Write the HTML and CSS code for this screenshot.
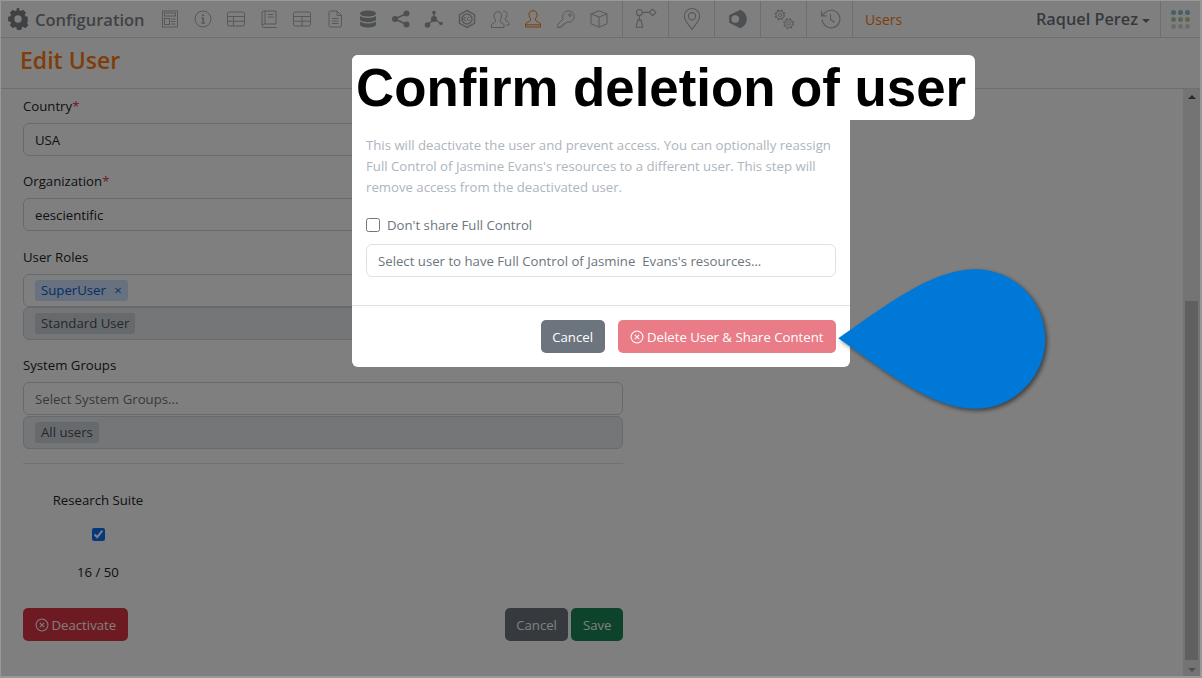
FILE: index.html
```html
<!DOCTYPE html>
<html lang="en">
<head>
    <meta charset="UTF-8">
    <title>Edit User</title>
    <link rel="stylesheet" href="styles.css">
</head>
<body>
<div class="app">
    <nav class="topbar">
        <a class="brand">
            <svg class="gear" viewBox="0 0 24 24"><path d="M21.5 14.4v-4.8l-2.6-.5a7.4 7.4 0 0 0-.7-1.7l1.5-2.2-3.4-3.4-2.2 1.5a7.4 7.4 0 0 0-1.7-.7L11.900 0H9.600l-.5 2.600a7.400 7.400 0 0 0-1.700.7L5.200 1.800 1.800 5.200l1.500 2.200a7.400 7.400 0 0 0-.7 1.700L0 9.600v4.800l2.600.5a7.400 7.400 0 0 0 .7 1.700l-1.500 2.200 3.400 3.400 2.200-1.500a7.400 7.400 0 0 0 1.700.7l.5 2.600h4.800l.5-2.600a7.400 7.400 0 0 0 1.700-.7l2.200 1.500 3.400-3.400-1.500-2.200a7.400 7.400 0 0 0 .7-1.700zM10.800 16a4 4 0 1 1 0-8 4 4 0 0 1 0 8z" transform="translate(1.200 0)"/></svg>
            <span>Configuration</span>
        </a>
        <div class="tools">
            <a class="tool"><svg viewBox="0 0 20 20"><rect x="2.500" y="2" width="15" height="16"/><rect x="4.500" y="4" width="11" height="3"/><rect x="4.500" y="9.500" width="5" height="6"/><path d="M11 10h4.500M11 12.500h4.500M11 15h4.500"/></svg></a>
            <a class="tool"><svg viewBox="0 0 20 20"><circle cx="10" cy="10" r="8"/><path d="M8.500 9h1.700v5M8.300 14h3.600" stroke-width="1.500"/><circle class="fill" cx="10" cy="6.300" r="1"/></svg></a>
            <a class="tool"><svg viewBox="0 0 20 20"><rect x="1.500" y="3" width="17" height="14" rx="2"/><path d="M1.500 7.500h17M1.500 12.200h17M7.500 7.500V17"/></svg></a>
            <a class="tool"><svg viewBox="0 0 20 20"><path d="M3 16V4a2 2 0 0 1 2-2h12v13H5a2 2 0 0 0-2 2 2 2 0 0 0 2 1.500h12.500M6 2v13M9 5.500h5.500M9 8h5.500"/></svg></a>
            <a class="tool"><svg viewBox="0 0 20 20"><rect x="1.500" y="3" width="17" height="14" rx="2"/><path d="M1.500 7.500h17M1.500 12.200h17M10 7.500V17"/></svg></a>
            <a class="tool"><svg viewBox="0 0 20 20"><path d="M4 3.500A1.500 1.500 0 0 1 5.500 2H12l4.500 4.500v10A1.500 1.500 0 0 1 15 18H5.500A1.500 1.500 0 0 1 4 16.500zM12 2v4.500h4.500M7 9.500h6.500M7 12h6.500M7 14.500h6.500"/></svg></a>
            <a class="tool"><svg viewBox="0 0 20 20" class="solid"><path d="M2 4.500C2 2.800 5.600 1.500 10 1.500s8 1.300 8 3-3.600 3-8 3-8-1.300-8-3zM2 7c1.500 1.300 4.500 2 8 2s6.500-.7 8-2v3.300c0 1.600-3.600 2.900-8 2.900s-8-1.300-8-2.900zM2 12.500c1.500 1.300 4.500 2 8 2s6.500-.7 8-2v3c0 1.700-3.600 3-8 3s-8-1.300-8-3z"/></svg></a>
            <a class="tool"><svg viewBox="0 0 20 20" class="solid"><circle cx="4" cy="10" r="3"/><circle cx="15.500" cy="4.500" r="3"/><circle cx="15.500" cy="15.500" r="3"/><path d="M4 10l11.500-5.500M4 10l11.500 5.500" class="link"/></svg></a>
            <a class="tool"><svg viewBox="0 0 20 20" class="solid"><circle cx="10" cy="3.500" r="1.800"/><circle cx="3.500" cy="16" r="2.800"/><circle cx="10" cy="10" r="3"/><circle cx="17" cy="14.500" r="1.800"/><path d="M10 3.500V10L3.500 16M10 10l7 4.500" class="link"/></svg></a>
            <a class="tool"><svg viewBox="0 0 20 20"><path d="M10 1.500l7.500 4.200v8.600L10 18.500l-7.500-4.200V5.700z" stroke-width="1.500"/><circle cx="10" cy="10" r="5" stroke-width="1.500"/><path d="M9.300 8.700a1.600 1.600 0 1 0 0 2.600M12.800 8.700a1.600 1.600 0 1 0 0 2.600"/></svg></a>
            <a class="tool"><svg viewBox="0 0 20 20"><path d="M13 2.500c2-1 4 .5 4 3 0 1.800-.8 3.200-1.700 4v1.500c0 1 3.700 1.200 3.700 3.500V16h-3M1.500 18.500v-2.300c0-2.200 4-2.200 4-3.700v-1.800C4.500 9.800 4 8.500 4 6.800 4 4.200 5.700 2.800 7.800 2.800s3.800 1.400 3.800 4c0 1.700-.5 3-1.500 3.900v1.800c0 1.500 4 1.500 4 3.700v2.300z"/></svg></a>
            <a class="tool active"><svg viewBox="0 0 20 20"><path d="M2.500 18h15v-2.500c0-2.700-5-2.500-5-4.500v-1.500c1-1 1.500-2.300 1.500-4C14 3 12.300 1.700 10 1.700S6 3 6 5.500c0 1.700.5 3 1.500 4V11c0 2-5 1.800-5 4.500zM2.500 15.800h15"/></svg></a>
            <a class="tool"><svg viewBox="0 0 20 20"><path d="M12.500 1.800a5.700 5.700 0 0 1 0 11.400c-.6 0-1.100-.1-1.600-.2L9 15H7v2H5v1.500H1.800v-3.200L7.200 9.800a5.700 5.700 0 0 1 5.300-8z"/><circle cx="14" cy="6" r="1.300"/></svg></a>
            <a class="tool"><svg viewBox="0 0 20 20"><path d="M10 1.800l8 3v10l-8 3.400-8-3.400v-10zM2 4.800l8 3.200 8-3.200M10 8v10.200"/></svg></a>
        </div>
        <a class="cell"><svg viewBox="0 0 20 20"><circle cx="4" cy="4" r="2.700"/><path d="M6.700 4h6.300M16 1l3 3-3 3-3-3zM4 6.700v4.300M2.500 11h3L7 17.500H1z"/></svg></a>
        <a class="cell"><svg viewBox="0 0 20 20"><path d="M10 19.500C6.500 14.500 3 11.500 3 7.500a7 7 0 0 1 14 0c0 4-3.500 7-7 12z"/><circle cx="10" cy="7.500" r="3.300"/></svg></a>
        <a class="cell"><svg viewBox="0 0 20 20" class="solid"><path d="M2 6.500L12 1.500c3.500 1.500 6 4.500 6 8.500s-2.500 7-6 8.500L2 13.500z"/><circle cx="7.500" cy="10" r="3.500" class="hole"/></svg></a>
        <a class="cell"><svg viewBox="0 0 24 24"><circle cx="7.500" cy="7.500" r="1.800"/><circle cx="7.500" cy="7.500" r="4.300"/><circle cx="7.500" cy="7.500" r="5.300" class="teeth"/><circle cx="17" cy="17" r="1.800"/><circle cx="17" cy="17" r="4.300"/><circle cx="17" cy="17" r="5.300" class="teeth"/></svg></a>
        <a class="cell"><svg viewBox="0 0 20 20"><path d="M3 10.500a8 8 0 1 0 2.500-6.300L2.500 7M2.300 2.500v4.700H7M10.500 5.500v5l3.500 2.500"/></svg></a>
        <a class="crumb">Users</a>
        <a class="user">Raquel Perez<i class="caret"></i></a>
        <a class="apps">
            <i class="dot teal"></i><i class="dot teal"></i><i class="dot teal"></i>
            <i class="dot green"></i><i class="dot green"></i><i class="dot green"></i>
            <i class="dot gray"></i><i class="dot gray"></i><i class="dot gray"></i>
        </a>
    </nav>

    <header class="page-title">Edit User</header>

    <div class="page-body">
        <form class="user-form">
            <label class="field-label">Country<span class="req">*</span></label>
            <div class="control">USA</div>

            <label class="field-label">Organization<span class="req">*</span></label>
            <div class="control">eescientific</div>

            <label class="field-label">User Roles</label>
            <div class="control tags"><span class="tag blue">SuperUser <b>×</b></span></div>
            <div class="control picked"><span class="tag">Standard User</span></div>

            <label class="field-label">System Groups</label>
            <div class="control placeholder">Select System Groups...</div>
            <div class="control picked"><span class="tag">All users</span></div>

            <hr class="rule">

            <div class="suite">
                <div>Research Suite</div>
                <div class="suite-check"><input type="checkbox" checked></div>
                <div>16 / 50</div>
            </div>

            <div class="form-actions">
                <button type="button" class="btn danger">
                    <svg class="x-icon" viewBox="0 0 16 16"><circle cx="8" cy="8" r="6.800"/><path d="M5.500 5.500l5 5M10.500 5.500l-5 5"/></svg>Deactivate
                </button>
                <button type="button" class="btn grey push">Cancel</button>
                <button type="button" class="btn green">Save</button>
            </div>
        </form>
        <div class="scrollbar">
            <i class="arrow up"></i>
            <div class="thumb"></div>
            <i class="arrow down"></i>
        </div>
    </div>
</div>

<div class="backdrop">
    <div class="modal">
        <h1 class="modal-title">Confirm deletion of user</h1>
        <div class="modal-body">
            <p class="modal-text">This will deactivate the user and prevent access. You can optionally reassign Full Control of Jasmine Evans's resources to a different user. This step will remove access from the deactivated user.</p>
            <label class="check-row"><input type="checkbox"> Don't share Full Control</label>
            <div class="modal-select">Select user to have Full Control of Jasmine&nbsp; Evans's resources...</div>
        </div>
        <div class="modal-footer">
            <button type="button" class="btn grey">Cancel</button>
            <button type="button" class="btn pink">
                <svg class="x-icon" viewBox="0 0 16 16"><circle cx="8" cy="8" r="6.800"/><path d="M5.500 5.500l5 5M10.500 5.500l-5 5"/></svg>Delete User &amp; Share Content
            </button>
        </div>
    </div>
</div>

<svg class="callout" viewBox="830 260 230 160"><path d="M838.300 338.300C880 310 930 269.300 975 269.300c38.500 0 70.200 31 70.200 69.500s-31.700 70-70.200 70C930 408.800 880 367 838.300 338.300z"/></svg>
<div class="frame"></div>
</body>
</html>
```

FILE: styles.css
```css
* { box-sizing: border-box; }
html, body { margin: 0; height: 100%; }
body { font-family: "Open Sans", "Noto Sans", sans-serif; font-size: 13.2px; color: #212529; background: #fff; overflow: hidden; }
a { color: inherit; text-decoration: none; }

.app { height: 678px; display: flex; flex-direction: column; border: 1px solid transparent; border-width: 1px 2px 2px 1px; }
.frame { position: fixed; inset: 0; border: 1px solid #989898; border-width: 1px 2px 2px 1px; pointer-events: none; }

/* top bar */
.topbar { height: 37px; flex: none; display: flex; align-items: stretch; border-bottom: 1px solid #dcdcdc; }
.brand { width: 152px; display: flex; align-items: center; gap: 6px; padding-left: 6px; color: #7e848a; font-size: 16.500px; font-weight: 600; }
.gear { width: 22px; height: 22px; fill: #7e848a; }
.tools { display: flex; width: 469px; }
.tool { width: 33px; display: flex; align-items: center; justify-content: center; }
.cell { width: 46px; border-left: 1px solid #dcdcdc; display: flex; align-items: center; justify-content: center; margin: 0; }
.topbar svg:not(.gear) { width: 20px; height: 20px; fill: none; stroke: #b0b0b0; stroke-width: 1; }
.topbar .cell svg { width: 22px; height: 22px; }
.topbar svg.solid { fill: #9aa0a6; stroke: none; }
.topbar svg .fill { fill: #a8a8a8; stroke: none; }
.topbar svg .link { fill: none; stroke: #9aa0a6; stroke-width: 1.400; }
.topbar svg .hole { fill: #fff; }
.topbar svg .teeth { stroke-width: 1.200; stroke-dasharray: 2.200 2; }
.topbar .tool.active svg { stroke: #ee7f1e; }
.crumb { width: 120px; border-left: 1px solid #dcdcdc; display: flex; align-items: center; padding-left: 12px; color: #ff7b12; font-size: 14px; }
.user { margin-left: auto; display: flex; align-items: center; gap: 4px; font-size: 16.300px; font-weight: 600; color: #6c757d; padding-right: 10px; }
.caret { border: 4px solid transparent; border-top-color: #6c757d; border-bottom: 0; margin-top: 3px; }
.apps { width: 40px; border-left: 1px solid #dcdcdc; display: grid; grid-template-columns: repeat(3, 5px); gap: 2px; padding: 9px 0 0 10px; align-content: start; }
.dot { width: 5px; height: 5px; border-radius: 50%; }
.dot.teal { background: #8fbccb; }
.dot.green { background: #b4cfa2; }
.dot.gray { background: #d6d6d6; }

.page-title { height: 51px; flex: none; padding: 6px 0 0 19px; font-size: 23px; font-weight: 600; color: #ff7b12; line-height: 32px; border-bottom: 1px solid #dcdcdc; }

/* form */
.page-body { flex: 1; display: flex; min-height: 0; }
.user-form { width: 600px; margin-left: 22px; padding-top: 5.800px; }
.field-label { display: block; height: 20px; line-height: 20px; padding-top: 1px; margin-bottom: 8px; color: #212529; }
.req { color: #dc3545; }
.control { height: 33px; border: 1px solid #ced4da; border-radius: 6px; padding: 1px 11px 0; display: flex; align-items: center; margin-bottom: 14.500px; background: #fff; }
.control.tags { margin-bottom: 0; }
.control.placeholder { color: #6c757d; margin-bottom: .5px; }
.control.picked { background: #e9ecef; }
.tag { background: #ced4da; border-radius: 3px; padding: 0 6px; height: 21px; line-height: 21px; color: #495057; }
.tag.blue { background: #cfe2ff; color: #0d5cc7; }
.tag b { font-weight: 400; margin-left: 5px; }
.rule { border: 0; border-top: 1px solid #dee2e6; margin: 0; }
.suite { width: 150px; text-align: center; padding-top: 27px; }
.suite-check { height: 38px; display: flex; align-items: center; justify-content: center; margin: 6px 0 10px; }
.suite-check input { width: 13px; height: 13px; margin: 0; accent-color: #0d6efd; }
.form-actions { display: flex; gap: 3px; margin-top: 27px; }
.push { margin-left: auto; }

.btn { height: 33px; border: 0; border-radius: 5px; padding: 0 11.500px; font: inherit; color: #fff; display: inline-flex; align-items: center; gap: 3px; }
.btn.danger { background: #dc3545; }
.btn.grey { background: #6c757d; }
.btn.green { background: #198754; }
.btn.pink { background: #e97c87; padding: 0 12.500px; }
.x-icon { width: 14px; height: 14px; fill: none; stroke: #fff; stroke-width: 1.200; }

/* fake scrollbar, the shot has one */
.scrollbar { width: 17px; margin-left: auto; background: #e8e8e8; display: flex; flex-direction: column; align-items: center; }
.thumb { width: 13px; height: 359px; flex: none; background: #c1c1c1; margin-top: 202px; }
.arrow { border: 4px solid transparent; }
.arrow.up { border-bottom-color: #505050; border-top: 0; margin-top: 6px; }
.arrow.down { border-top-color: #a0a0a0; border-bottom: 0; margin-top: 8px; }

/* modal */
.backdrop { position: fixed; inset: 0; background: rgba(0, 0, 0, .5); display: flex; justify-content: center; align-items: flex-start; padding-top: 55px; }
.modal { width: 498px; height: 312px; background: #fff; border-radius: 6px; }
.modal-title { width: max-content; margin: 0; height: 65px; line-height: 65px; padding: 0 9px 0 4px; background: #fff; border-radius: 6px; font-family: "Liberation Sans", Arial, sans-serif; font-size: 52.800px; font-weight: 700; color: #000; position: relative; }
.modal-body { padding: 15px 14px 0; height: 186px; border-bottom: 1px solid #dee2e6; }
.modal-text { margin: 0 0 16px; line-height: 21px; color: #adb5bd; }
.check-row { display: flex; align-items: center; gap: 7px; color: #6c757d; height: 21px; margin-bottom: 9px; }
.check-row input { width: 14px; height: 14px; margin: 0; }
.modal-select { height: 33px; border: 1px solid #dee2e6; border-radius: 6px; padding: 0 11px; display: flex; align-items: center; color: #6c757d; white-space: nowrap; }
.modal-footer { display: flex; justify-content: flex-end; gap: 13px; padding: 14px 14px 0; }

.callout { position: fixed; left: 830px; top: 260px; width: 230px; height: 160px; overflow: visible; filter: drop-shadow(2px 2px 2px rgba(0, 0, 0, .5)); }
.callout path { fill: #0078d7; }
```
